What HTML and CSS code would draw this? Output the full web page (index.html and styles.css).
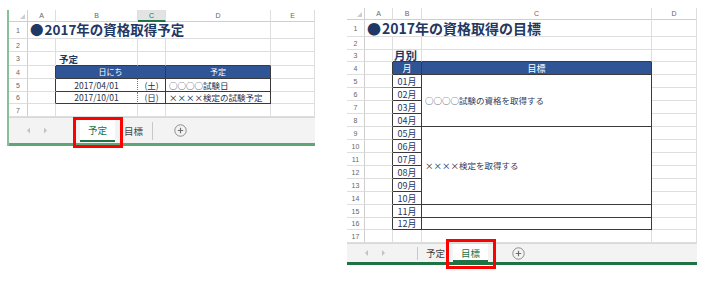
FILE: index.html
```html
<!DOCTYPE html>
<html lang="ja">
<head>
<meta charset="utf-8">
<title>2017年の資格取得</title>
<link rel="stylesheet" href="styles.css">
</head>
<body>
<div class="page">
  <section class="sheet sheet-left">
    <div class="grid grid-left">
      <div class="c corner"><span class="tri"></span></div><div class="c h">A</div><div class="c h">B</div><div class="c h sel">C</div><div class="c h">D</div><div class="c h">E</div>

      <div class="c rn">1</div><div class="c title span4"><span class="dotmark">●</span>2017年の資格取得予定</div><div class="c"></div>

      <div class="c rn">2</div><div class="c"></div><div class="c"></div><div class="c"></div><div class="c"></div><div class="c"></div>

      <div class="c rn">3</div><div class="c"></div><div class="c bb label">予定</div><div class="c bb"></div><div class="c bb"></div><div class="c"></div>

      <div class="c rn">4</div><div class="c br"></div><div class="c t th span2">日にち</div><div class="c t th">予定</div><div class="c"></div>

      <div class="c rn">5</div><div class="c br"></div><div class="c t ctr dot">2017/04/01</div><div class="c t ctr">(土)</div><div class="c t pl">○○○○試験日</div><div class="c"></div>

      <div class="c rn">6</div><div class="c br"></div><div class="c t ctr dot">2017/10/01</div><div class="c t ctr">(日)</div><div class="c t pl">××××検定の試験予定</div><div class="c"></div>

      <div class="c rn">7</div><div class="c"></div><div class="c"></div><div class="c"></div><div class="c"></div><div class="c"></div>
    </div>
    <div class="tabs tabs-left">
      <div class="nav nav-left"><span class="arr arr-l"></span><span class="arr arr-r"></span></div>
      <div class="tab active">予定<span class="mark mark-left"></span></div>
      <div class="tab tab-w37">目標</div>
      <div class="sep"></div>
      <svg class="plus plus-left" width="13" height="13" viewBox="0 0 13 13"><circle cx="6.5" cy="6.5" r="5.7" fill="none" stroke="#8a8a8a" stroke-width="1"/><path d="M6.5 3.8v5.4M3.8 6.5h5.4" stroke="#6f6f6f" stroke-width="1.2"/></svg>
    </div>
  </section>

  <section class="sheet sheet-right">
    <div class="grid grid-right">
      <div class="c corner"><span class="tri"></span></div><div class="c h">A</div><div class="c h">B</div><div class="c h">C</div><div class="c h">D</div>

      <div class="c rn">1</div><div class="c title span3"><span class="dotmark">●</span>2017年の資格取得の目標</div><div class="c"></div>

      <div class="c rn">2</div><div class="c"></div><div class="c"></div><div class="c"></div><div class="c"></div>

      <div class="c rn">3</div><div class="c"></div><div class="c bb label label-big">月別</div><div class="c bb"></div><div class="c"></div>

      <div class="c rn">4</div><div class="c br"></div><div class="c t th th-r">月</div><div class="c t th th-r">目標</div><div class="c"></div>

      <div class="c rn">5</div><div class="c br"></div><div class="c t ctr mon">01月</div><div class="c t pl goal rows4">○○○○試験の資格を取得する</div><div class="c"></div>
      <div class="c rn">6</div><div class="c br"></div><div class="c t ctr mon">02月</div><div class="c"></div>
      <div class="c rn">7</div><div class="c br"></div><div class="c t ctr mon">03月</div><div class="c"></div>
      <div class="c rn">8</div><div class="c br"></div><div class="c t ctr mon">04月</div><div class="c"></div>

      <div class="c rn">9</div><div class="c br"></div><div class="c t ctr mon">05月</div><div class="c t pl goal rows6">××××検定を取得する</div><div class="c"></div>
      <div class="c rn">10</div><div class="c br"></div><div class="c t ctr mon">06月</div><div class="c"></div>
      <div class="c rn">11</div><div class="c br"></div><div class="c t ctr mon">07月</div><div class="c"></div>
      <div class="c rn">12</div><div class="c br"></div><div class="c t ctr mon">08月</div><div class="c"></div>
      <div class="c rn">13</div><div class="c br"></div><div class="c t ctr mon">09月</div><div class="c"></div>
      <div class="c rn">14</div><div class="c br"></div><div class="c t ctr mon">10月</div><div class="c"></div>

      <div class="c rn">15</div><div class="c br"></div><div class="c t ctr mon">11月</div><div class="c t"></div><div class="c"></div>
      <div class="c rn">16</div><div class="c br"></div><div class="c t ctr mon">12月</div><div class="c t"></div><div class="c"></div>

      <div class="c rn">17</div><div class="c"></div><div class="c"></div><div class="c"></div><div class="c"></div>
    </div>
    <div class="tabs tabs-right">
      <div class="nav nav-right"><span class="arr arr-l"></span><span class="arr arr-r"></span></div>
      <div class="sep sep-right"></div>
      <div class="tab">予定</div>
      <div class="tab active">目標<span class="mark mark-right"></span></div>
      <svg class="plus plus-right" width="13" height="13" viewBox="0 0 13 13"><circle cx="6.5" cy="6.5" r="5.7" fill="none" stroke="#8a8a8a" stroke-width="1"/><path d="M6.5 3.8v5.4M3.8 6.5h5.4" stroke="#6f6f6f" stroke-width="1.2"/></svg>
    </div>
  </section>
</div>
</body>
</html>
```

FILE: styles.css
```css
* { box-sizing: border-box; margin: 0; padding: 0; }

body {
  background: #fff;
  font-family: "Noto Sans CJK JP", "Noto Sans", sans-serif;
  color: #1f2f55;
}

.page {
  display: flex;
  align-items: flex-start;
  width: 710px;
  height: 283px;
  overflow: hidden;
}

.sheet {
  display: flex;
  flex-direction: column;
}

.sheet-left {
  margin: 10px 0 0 7px;
  border-left: 2px solid #86c09a;
}

.sheet-right {
  margin: 8px 0 0 32px;
}

.grid { display: grid; }

.grid-left {
  grid-template-columns: 19px 28px 82px 28px 105px 44px;
  grid-template-rows: 12px 17px 13px 14px 13px 13px 12px 13px;
}

.grid-right {
  grid-template-columns: 18px 28px 29px 230px 45px;
  grid-template-rows: 12px 17px 13px 12px repeat(12, 13px) 12px 13px;
}

.c {
  border-right: 1px solid #dedede;
  border-bottom: 1px solid #dedede;
  font-size: 8.5px;
  line-height: 1;
  display: flex;
  align-items: center;
  white-space: nowrap;
  min-width: 0;
}

.corner {
  justify-content: flex-end;
  align-items: flex-end;
  padding: 0 2px 2px 0;
  border-right-color: #cfcfcf;
  border-bottom-color: #cfcfcf;
}

.tri {
  width: 5px;
  height: 5px;
  background: #cdcdcd;
  clip-path: polygon(100% 0, 100% 100%, 0 100%);
}

.h {
  justify-content: center;
  font-family: "Liberation Sans", Arial, sans-serif;
  font-size: 7px;
  color: #666;
  border-bottom-color: #cfcfcf;
}

.h.sel {
  background: #e3e3e3;
  color: #217346;
  border-bottom: 2px solid #217346;
}

.rn {
  justify-content: center;
  font-family: "Liberation Sans", Arial, sans-serif;
  font-size: 7px;
  color: #666;
  border-right-color: #cfcfcf;
}

.title {
  font-size: 13.5px;
  font-weight: bold;
  color: #1f3864;
  padding-left: 2px;
}

.grid-right .title { font-size: 14px; }

.dotmark { margin-right: 1px; }

.span4 { grid-column: span 4; }
.span3 { grid-column: span 3; }
.span2 { grid-column: span 2; }
.rows4 { grid-row: span 4; }
.rows6 { grid-row: span 6; }

.label {
  font-size: 9.5px;
  font-weight: bold;
  color: #1f3864;
  padding-left: 3px;
  align-items: flex-end;
  padding-bottom: 1px;
}

.label-big {
  font-size: 11.5px;
  padding-left: 1px;
  padding-bottom: 0;
}

.bb { border-bottom-color: #3a3a3a; }
.br { border-right-color: #3a3a3a; }

.t {
  border-right: 1px solid #3a3a3a;
  border-bottom: 1px solid #3a3a3a;
  color: #26304d;
}

.th {
  background: #2f5597;
  color: #fff;
  justify-content: center;
  font-size: 8px;
}

.th-r { font-size: 9px; }

.ctr { justify-content: center; }

.dot { border-right: 1px dotted #7a7a7a; }

.pl { padding-left: 3px; }

.mon {
  font-size: 9px;
  color: #1f3864;
}

.goal { color: #2f3a5c; }

/* sheet tabs */
.tabs {
  display: flex;
  align-items: stretch;
  background: #f3f3f3;
  border-top: 1px solid #d8d8d8;
}

.tabs-left {
  height: 29px;
  border-bottom: 3px solid #5fa577;
}

.tabs-right {
  height: 22px;
  border-bottom: 3px solid #1f7244;
}

.nav {
  display: flex;
  align-items: center;
  gap: 14px;
}

.nav-left { width: 71px; padding-left: 18px; }
.nav-right { width: 70px; padding-left: 18px; }

.arr {
  width: 3px;
  height: 6px;
  background: #c3c3c3;
}

.arr-l { clip-path: polygon(100% 0, 0 50%, 100% 100%); }
.arr-r { clip-path: polygon(0 0, 100% 50%, 0 100%); }

.tab {
  position: relative;
  width: 35px;
  display: flex;
  align-items: center;
  justify-content: center;
  font-size: 9.5px;
  color: #444;
}

.tab-w37 { width: 37px; }

.tab.active {
  background: #fff;
  color: #217346;
  border-bottom: 2px solid #217346;
  padding-top: 2px;
}

.tabs-left .tab.active { margin-bottom: 1px; }

.sep {
  width: 1px;
  background: #c8c8c8;
  margin: 4px 0 3px;
}

.sep-right { margin: 3px 0 2px; }

.plus {
  align-self: center;
}

.plus-left { margin-left: 21px; }
.plus-right { margin-left: 24px; }

.mark {
  position: absolute;
  border: 3px solid #f00;
}

.mark-left {
  left: -7px;
  top: -1px;
  width: 50px;
  height: 31px;
}

.mark-right {
  left: -7px;
  top: -5px;
  width: 50px;
  height: 30px;
}
```
